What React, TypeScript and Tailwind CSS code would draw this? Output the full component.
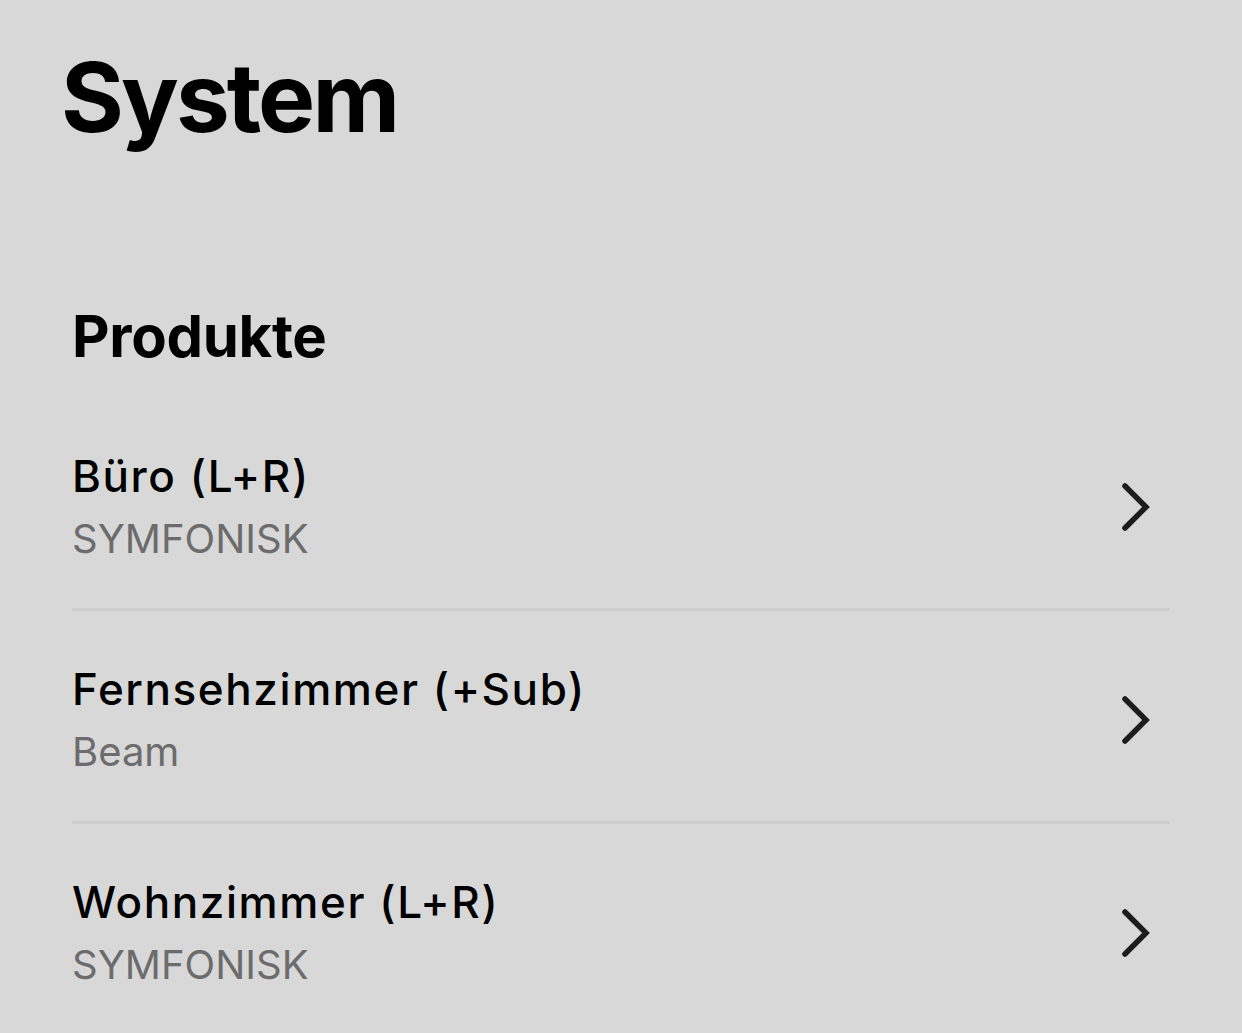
import React from 'react';

const products = [
  { name: 'Büro (L+R)', model: 'SYMFONISK' },
  { name: 'Fernsehzimmer (+Sub)', model: 'Beam' },
  { name: 'Wohnzimmer (L+R)', model: 'SYMFONISK' },
];

function Chevron() {
  return (
    <svg width="32" height="52" viewBox="0 0 32 52" fill="none" className="shrink-0">
      <path d="M5 5 L26 26 L5 47" stroke="#1c1c1c" strokeWidth="5.5" strokeLinecap="round" strokeLinejoin="miter" />
    </svg>
  );
}

export default function App() {
  return (
    <main className="min-h-[1033px] w-full bg-[#d8d8d8] font-['Inter',sans-serif] text-black">
      {/* Header */}
      <h1 className="pl-[61px] pt-[49px] text-[96px] font-bold leading-none tracking-[-0.03em]">System</h1>

      {/* Produkte */}
      <section className="pl-[72px] pr-[72px] pt-[156px]">
        <h2 className="text-[58px] font-bold leading-[70px] tracking-[-0.005em]">Produkte</h2>

        <div className="mt-[27px]">
          {products.map((p, i) => (
            <div
              key={p.name}
              className={
                i < products.length - 1
                  ? 'flex items-center justify-between border-b-[3px] border-[#cdcdcd] pt-[50px] pb-[43px]'
                  : 'flex items-center justify-between pt-[50px] pb-[43px]'
              }
            >
              <div>
                <p className="text-[44px] font-medium leading-[56px] tracking-[0.036em]">{p.name}</p>
                <p className="mt-[9px] text-[40px] leading-[52px] text-[#6c6c6c]">{p.model}</p>
              </div>
              <div className="mr-[18px]">
                <Chevron />
              </div>
            </div>
          ))}
        </div>
      </section>
    </main>
  );
}
